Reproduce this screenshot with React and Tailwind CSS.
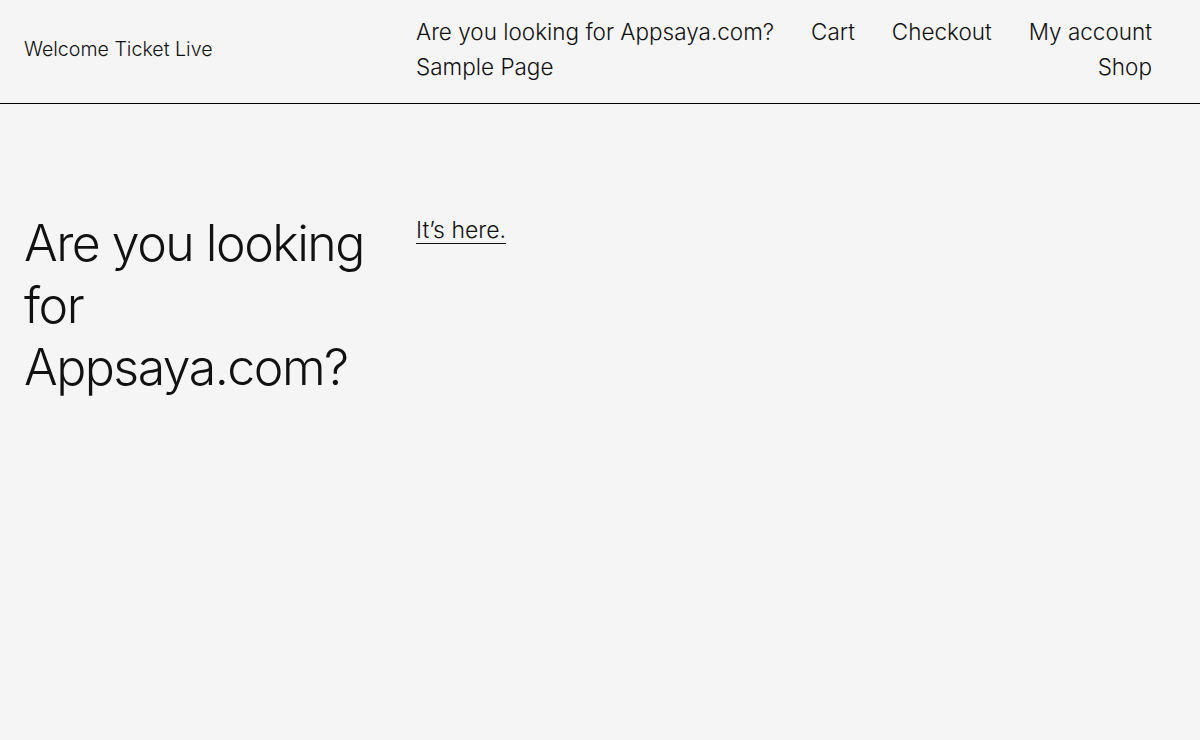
import React from "react";

const navItems = ["Are you looking for Appsaya.com?", "Cart", "Checkout", "My account", "Sample Page", "Shop"];

export default function App() {
    return (
        <div className="min-h-[740px] bg-[#f5f5f5] text-[#111] font-['Inter',sans-serif]">
            {/* Header */}
            <header className="flex items-center h-[104px] border-b border-black pl-6 pr-12">
                <a href="#" className="w-[392px] shrink-0 pb-[4px] text-[19.6px] font-light text-[#111]">
                    Welcome Ticket Live
                </a>
                <nav className="flex-1 flex flex-wrap justify-between gap-x-[34px] pb-[6px] text-[22.5px] leading-[35px] font-light">
                    {navItems.map(item => (
                        <a key={item} href="#" className="whitespace-nowrap">
                            {item}
                        </a>
                    ))}
                </nav>
            </header>

            {/* Main */}
            <main className="flex pl-6 pt-[108px]">
                <h1 className="w-[392px] shrink-0 text-[50px] leading-[62px] font-light tracking-[-1.5px]">
                    Are you looking for Appsaya.com?
                </h1>
                <div className="pt-[1px]">
                    <a href="#" className="text-[23px] font-light underline underline-offset-[5px] decoration-1">
                        It’s here.
                    </a>
                </div>
            </main>
        </div>
    );
}
